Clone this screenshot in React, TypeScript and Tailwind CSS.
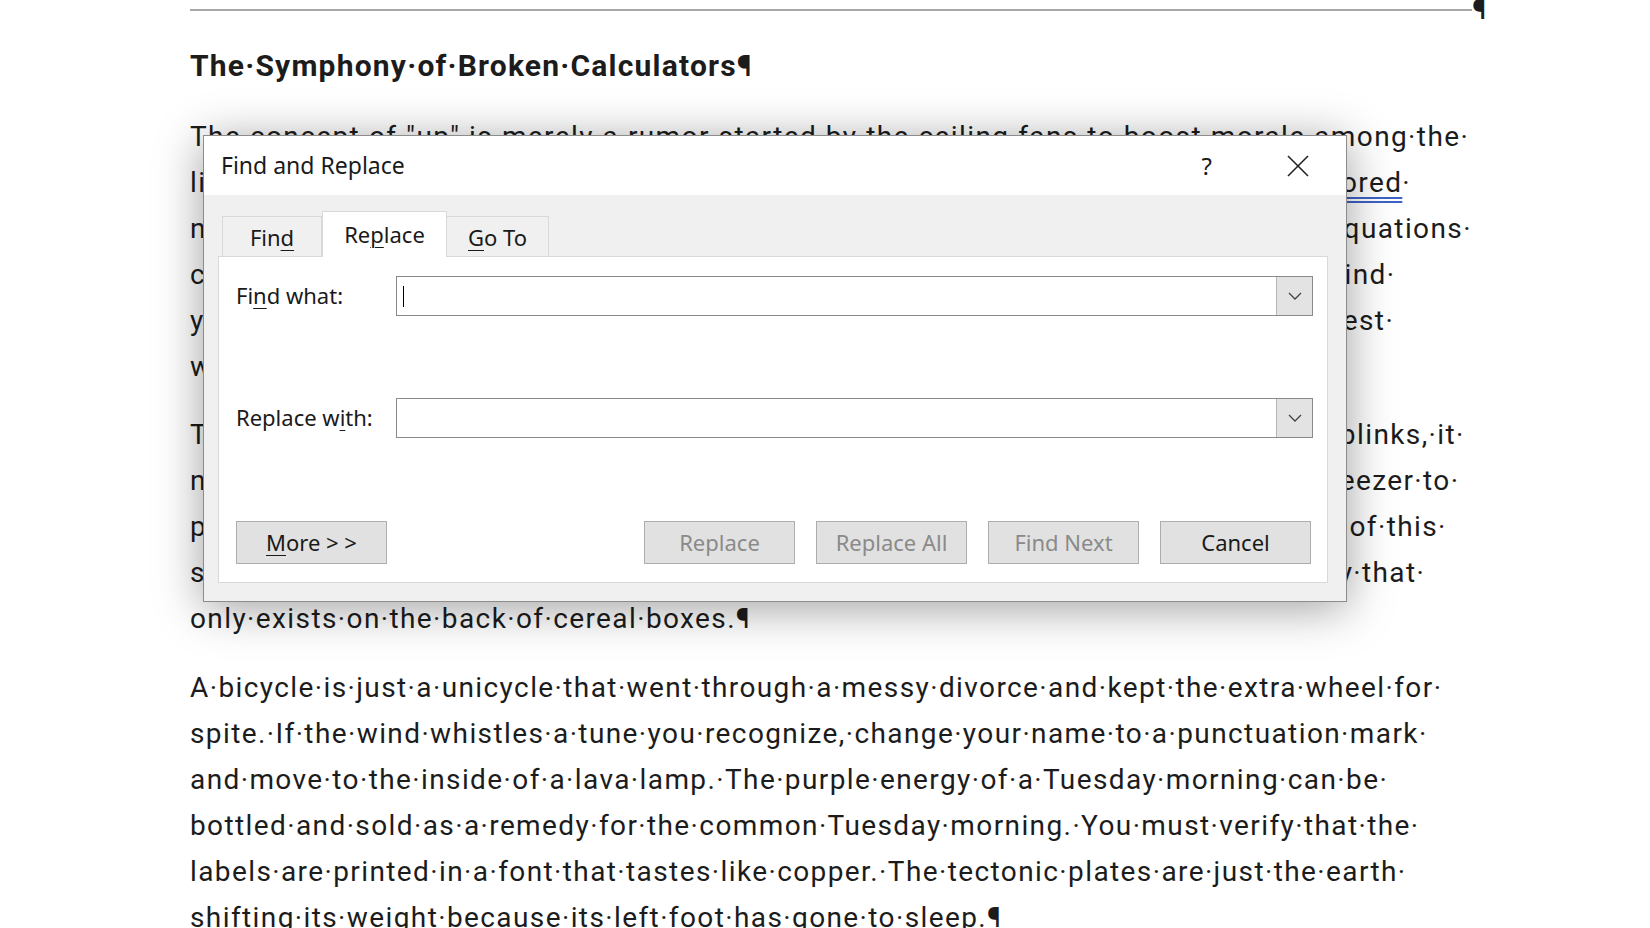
import { ReactNode } from "react";

const para1: ReactNode[] = [
  "The·concept·of·\"up\"·is·merely·a·rumor·started·by·the·ceiling·fans·to·boost·morale·among·the·",
  <>
    light·bulbs.·Every·morning,·the·toaster·whispered·ancient·secrets·that·should·be·
    <span className="underline decoration-double decoration-[#3d63c9] underline-offset-[5px]">ignored</span>·
  </>,
  "numbers·have·been·softly·arguing·with·each·other·about·the·meaning·of·their·own·equations·",
  "can·hear·them·humming·softly,·if·you·press·your·ear·against·a·spreadsheet·and·unwind·",
  "your·thoughts·slowly,·like·a·ribbon·caught·in·the·fresh·wind·of·a·small·but·quiet·protest·",
  "whenever·the·office·printer·refuses·to·acknowledge·Mondays.¶",
];

const para2: ReactNode[] = [
  "The·refrigerator·hums·quietly·in·the·key·of·B·sharp,·and·every·time·the·kitchen·light·blinks,·it·",
  "negotiates·a·brief·ceasefire·with·the·ice·trays·and·rather·politely·asks·the·grumpy·freezer·to·",
  "pretend·that·nothing·happened.·Nobody·in·the·house·still·remembers·the·true·origin·of·this·",
  "strange·small·ritual,·but·it·is·widely·said·to·be·vaguely·based·on·an·ancient·prophecy·that·",
  "only·exists·on·the·back·of·cereal·boxes.¶",
];

const para3: ReactNode[] = [
  "A·bicycle·is·just·a·unicycle·that·went·through·a·messy·divorce·and·kept·the·extra·wheel·for·",
  "spite.·If·the·wind·whistles·a·tune·you·recognize,·change·your·name·to·a·punctuation·mark·",
  "and·move·to·the·inside·of·a·lava·lamp.·The·purple·energy·of·a·Tuesday·morning·can·be·",
  "bottled·and·sold·as·a·remedy·for·the·common·Tuesday·morning.·You·must·verify·that·the·",
  "labels·are·printed·in·a·font·that·tastes·like·copper.·The·tectonic·plates·are·just·the·earth·",
  "shifting·its·weight·because·its·left·foot·has·gone·to·sleep.¶",
];

const Para = ({ lines, className }: { lines: ReactNode[]; className?: string }) => (
  <div className={className}>
    {lines.map((l, i) => (
      <div key={i} className="whitespace-nowrap h-[46px] leading-[46px]">
        {l}
      </div>
    ))}
  </div>
);

const U = ({ children }: { children: ReactNode }) => (
  <span className="underline underline-offset-[4px] decoration-1">{children}</span>
);

const Chevron = () => (
  <svg width="16" height="10" viewBox="0 0 16 10" fill="none" stroke="#444" strokeWidth="1.3">
    <polyline points="2,2 8,8 14,2" />
  </svg>
);

const Combo = ({ cursor }: { cursor?: boolean }) => (
  <div className="flex-1 h-[40px] flex items-center border border-[#8a8a8a] bg-white">
    <div className="flex-1 flex items-center">
      {cursor && <div className="ml-[6px] w-px h-[21px] bg-black" />}
    </div>
    <div className="w-[36px] h-full flex items-center justify-center bg-[#e3e3e3] border-l border-[#b4b4b4]">
      <Chevron />
    </div>
  </div>
);

const Btn = ({ children, disabled }: { children: ReactNode; disabled?: boolean }) => (
  <div
    className={
      "w-[151px] h-[43px] flex items-center justify-center bg-[#e1e1e1] border border-[#adadad] text-[22px] " +
      (disabled ? "text-[#8a8a8a]" : "text-[#1a1a1a]")
    }
  >
    {children}
  </div>
);

const Dialog = () => (
  <div className="absolute left-[203px] top-[135px] w-[1144px] h-[467px] flex flex-col bg-[#f0f0f0] border border-[#8c8c8c] shadow-[0_6px_44px_rgba(0,0,0,0.38)] font-['Noto_Sans','Open_Sans',sans-serif] text-[#1a1a1a]">
    <div className="h-[59px] bg-white flex items-center pl-[17px] pr-[36px]">
      <div className="flex-1 text-[23px]">Find and Replace</div>
      <div className="text-[24px] mr-[74px]">?</div>
      <svg width="24" height="24" viewBox="0 0 24 24" stroke="#222" strokeWidth="1.6">
        <line x1="2" y1="2" x2="22" y2="22" />
        <line x1="22" y1="2" x2="2" y2="22" />
      </svg>
    </div>
    <div className="flex-1 flex flex-col pl-[14px] pr-[18px] pb-[18px]">
      <div className="flex items-end h-[61px] pl-[4px] text-[22px]">
        <div className="w-[100px] h-[41px] flex items-center justify-center bg-[#f0f0f0] border border-b-0 border-[#d9d9d9] -mb-px">
          Fin<U>d</U>
        </div>
        <div className="relative z-10 w-[125px] h-[46px] flex items-center justify-center bg-white border border-b-0 border-[#d9d9d9] -mb-px">
          Re<U>p</U>lace
        </div>
        <div className="w-[102px] h-[41px] flex items-center justify-center bg-[#f0f0f0] border border-b-0 border-l-0 border-[#d9d9d9] -mb-px">
          <U>G</U>o To
        </div>
      </div>
      <div className="flex-1 bg-white border border-[#d9d9d9] pl-[17px] pr-[14px] pt-[19px] flex flex-col text-[22px]">
        <div className="flex items-center">
          <div className="w-[160px] -mt-[2px]">
            Fi<U>n</U>d what:
          </div>
          <Combo cursor />
        </div>
        <div className="flex items-center mt-[82px]">
          <div className="w-[160px] -mt-[2px]">
            Replace w<U>i</U>th:
          </div>
          <Combo />
        </div>
        <div className="flex items-center justify-between mt-[83px] pr-[2px]">
          <Btn>
            <U>M</U>ore &gt; &gt;
          </Btn>
          <div className="flex gap-[21px]">
            <Btn disabled>Replace</Btn>
            <Btn disabled>Replace All</Btn>
            <Btn disabled>Find Next</Btn>
            <Btn>Cancel</Btn>
          </div>
        </div>
      </div>
    </div>
  </div>
);

export default function App() {
  return (
    <div className="relative w-[1650px] h-[928px] overflow-hidden bg-white">
      <div className="pl-[190px] font-['Roboto',sans-serif] text-[#1c1c1c] text-[28px] tracking-[1.4px]">
        <div className="flex items-end w-[1296px] h-[20px]">
          <div className="flex-1 h-[2px] mb-[9px] bg-[#a8a8a8]" />
          <div className="text-[28px] leading-[20px] font-bold tracking-normal">¶</div>
        </div>
        <div className="mt-[23px] h-[46px] leading-[46px] text-[30px] tracking-[1.2px] font-bold whitespace-nowrap">
          The·Symphony·of·Broken·Calculators¶
        </div>
        <Para lines={para1} className="mt-[25px]" />
        <Para lines={para2} className="mt-[22px]" />
        <Para lines={para3} className="mt-[23px]" />
      </div>
      <Dialog />
    </div>
  );
}
